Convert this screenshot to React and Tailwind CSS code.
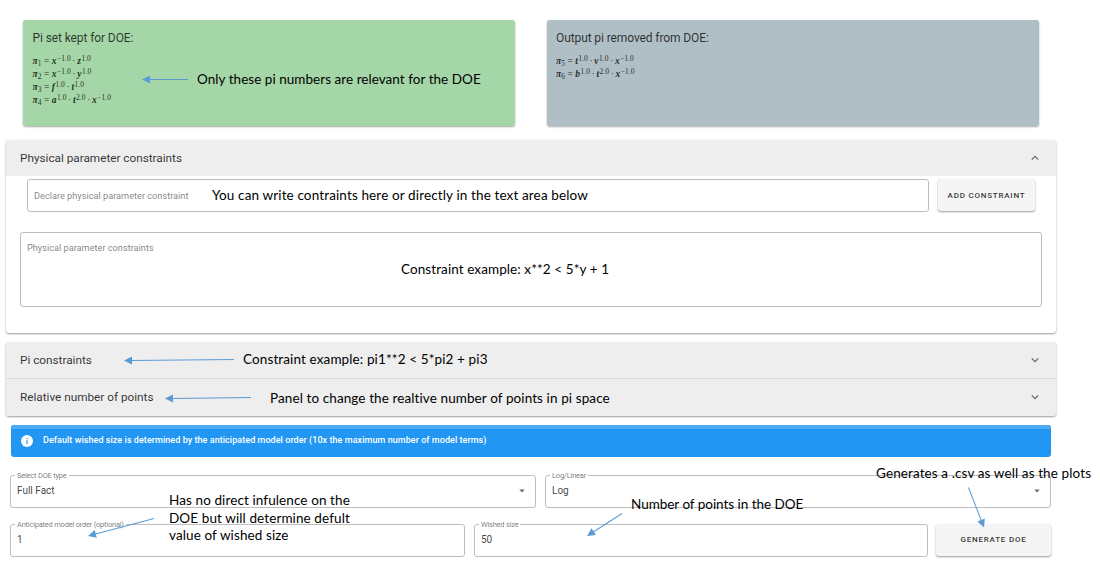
import React from "react";

const ROBOTO = "font-['Roboto',sans-serif]";

function Chevron({ up }) {
  return (
    <svg width="8" height="6" viewBox="0 0 8 6" fill="none" stroke="#666" strokeWidth="1.25">
      <path d={up ? "M0.8 4.6 L4 1.4 L7.2 4.6" : "M0.8 1.4 L4 4.6 L7.2 1.4"} />
    </svg>
  );
}

function Caret() {
  return (
    <svg width="6" height="4" viewBox="0 0 6 4" className="shrink-0">
      <path d="M0.3 0.5 H5.7 L3 3.4 Z" fill="#6b6b6b" />
    </svg>
  );
}

// A formula is a list of [base, exponent] factors.
function Formula({ index, factors }) {
  return (
    <div className="flex h-[13px] items-center whitespace-nowrap font-['Liberation_Serif',serif] text-[9.5px] leading-[13px] text-black/80">
      <i className="font-bold">π</i>
      <span className="relative top-[1.5px] text-[7.5px]">{index}</span>
      <span className="mx-[2.5px]">=</span>
      {factors.map(([base, exp], i) => (
        <span key={i} className="flex">
          {i > 0 && <span className="mx-[1.7px]">·</span>}
          <i className="font-bold">{base}</i>
          <span className="relative -top-[3px] ml-[0.5px] text-[7.5px]">{exp}</span>
        </span>
      ))}
    </div>
  );
}

function PiCard({ title, color, formulas }) {
  return (
    <section className={`h-[106px] w-[492px] rounded-[3px] px-[9.5px] pt-[9.4px] shadow-[0_1px_2px_rgba(0,0,0,0.35)] ${color}`}>
      <h2 className="mb-[8px] text-[12px] leading-[18px] tracking-[-0.1px] text-black/75">{title}</h2>
      {formulas.map((f) => (
        <Formula key={f.index} {...f} />
      ))}
    </section>
  );
}

function PanelHeader({ title, up, className = "" }) {
  return (
    <div className={`flex items-center justify-between bg-[#eeeeee] pl-[14px] pr-[17px] ${className}`}>
      <h3 className="pt-px text-[11.8px] tracking-[-0.02px] text-black/80">{title}</h3>
      <Chevron up={up} />
    </div>
  );
}

function OutlinedField({ label, value, select, className = "" }) {
  return (
    <fieldset className={`h-[38px] rounded-[3px] border border-[#bdbdbd] pl-[6px] pr-[10px] ${className}`}>
      <legend className="-ml-[2px] h-[11px] whitespace-nowrap px-[2px] text-[7.5px] leading-[11px] tracking-[-0.22px] text-black/55">{label}</legend>
      <div className="flex h-[20.6px] items-center justify-between text-[10px] text-black/75">
        <span>{value}</span>
        {select && <Caret />}
      </div>
    </fieldset>
  );
}

function Button({ children, className = "" }) {
  return (
    <button className={`h-[32px] shrink-0 rounded-[3px] bg-[#f5f5f5] pt-px text-[8px] font-medium tracking-[0.78px] text-black/80 shadow-[0_1px_2px_rgba(0,0,0,0.4)] ${className}`}>
      {children}
    </button>
  );
}

function Note({ children, className }) {
  return (
    <p className={`absolute whitespace-nowrap font-['Lato',sans-serif] text-[13.5px] leading-[17.5px] text-black [font-variant-ligatures:none] ${className}`}>{children}</p>
  );
}

const ARROWS = [
  [188, 79.5, 142, 79.5],
  [234, 359.5, 124, 360.5],
  [251, 397.5, 165, 398.5],
  [154, 518.5, 88, 536],
  [622, 513.5, 587, 536],
  [968.5, 487.5, 984, 527.5],
];

function Arrows() {
  return (
    <svg width="1100" height="572" className="pointer-events-none absolute left-0 top-0">
      {ARROWS.map(([x1, y1, x2, y2]) => {
        const len = Math.hypot(x2 - x1, y2 - y1);
        const angle = (Math.atan2(y2 - y1, x2 - x1) * 180) / Math.PI;
        return (
          <g key={`${x1}-${y1}`} transform={`translate(${x2} ${y2}) rotate(${angle})`}>
            <path d={`M${-len} 0 H-7`} stroke="#5b9bd5" strokeWidth="1" />
            <path d="M0 0 L-8 -4 V4 Z" fill="#5b9bd5" />
          </g>
        );
      })}
    </svg>
  );
}

export default function App() {
  return (
    <main className={`relative h-[572px] w-[1100px] overflow-hidden bg-white ${ROBOTO}`}>
      <div className="flex gap-[31.5px] pl-[23px] pt-[20px]">
        <PiCard
          title="Pi set kept for DOE:"
          color="bg-[#a5d6a7]"
          formulas={[
            { index: 1, factors: [["x", "−1.0"], ["z", "1.0"]] },
            { index: 2, factors: [["x", "−1.0"], ["y", "1.0"]] },
            { index: 3, factors: [["f", "1.0"], ["t", "1.0"]] },
            { index: 4, factors: [["a", "1.0"], ["t", "2.0"], ["x", "−1.0"]] },
          ]}
        />
        <PiCard
          title="Output pi removed from DOE:"
          color="bg-[#b0bec5]"
          formulas={[
            { index: 5, factors: [["t", "1.0"], ["v", "1.0"], ["x", "−1.0"]] },
            { index: 6, factors: [["b", "1.0"], ["t", "2.0"], ["x", "−1.0"]] },
          ]}
        />
      </div>

      <section className="ml-[6px] mt-[14px] h-[193px] w-[1050px] overflow-hidden rounded-[3px] bg-white shadow-[0_1px_2px_rgba(0,0,0,0.4)]">
        <PanelHeader title="Physical parameter constraints" up className="h-[36px]" />
        <div className="flex gap-[9px] pl-[21px] pt-[3px]">
          <div className="flex h-[33px] w-[902px] items-center rounded-[3px] border border-[#bdbdbd] pl-[6px] text-[9.2px] text-black/50">
            Declare physical parameter constraint
          </div>
          <Button className="w-[97px]">ADD CONSTRAINT</Button>
        </div>
        <div className="ml-[14px] mt-[20px] h-[75px] w-[1022px] rounded-[3px] border border-[#bdbdbd] pl-[6px] pt-[8px] text-[9.2px] leading-[13px] text-black/50">
          Physical parameter constraints
        </div>
      </section>

      <section className="ml-[6px] mt-[9px] h-[74px] w-[1050px] overflow-hidden rounded-[3px] shadow-[0_1px_2px_rgba(0,0,0,0.4)]">
        <PanelHeader title="Pi constraints" className="h-[37px] border-b border-[#dcdcdc]" />
        <PanelHeader title="Relative number of points" className="h-[37px] pb-px" />
      </section>

      <div className="ml-[11px] mt-[8.5px] h-[32px] w-[1040px] overflow-hidden rounded-[3px] bg-[#2196f3] text-[9px] text-white">
        <div className="h-[4px] bg-[#4dabf5]" />
        <div className="flex h-[24px] items-center pl-[10px]">
          <svg width="12" height="12" viewBox="0 0 12 12" className="mr-[10px]">
            <circle cx="6" cy="6" r="6" fill="white" />
            <path d="M6 3 V4.2 M6 5.3 V9" stroke="#2196f3" strokeWidth="1.2" />
          </svg>
          <span className="font-medium tracking-[0.055px]">
            Default wished size is determined by the anticipated model order (10x the maximum number of model terms)
          </span>
        </div>
      </div>

      <div className="ml-[10px] mt-[13px] flex gap-[9px]">
        <OutlinedField label="Select DOE type" value="Full Fact" select className="w-[526px]" />
        <OutlinedField label="Log/Linear" value="Log" select className="w-[506px]" />
      </div>
      <div className="ml-[10px] mt-[11px] flex gap-[9px]">
        <OutlinedField label="Anticipated model order (optional)" value="1" className="w-[455px]" />
        <OutlinedField label="Wished size" value="50" className="w-[454px]" />
        <Button className="-ml-px mt-[5px] w-[115px]">GENERATE DOE</Button>
      </div>

      <Arrows />
      <Note className="left-[197px] top-[71px] tracking-[0.04px]">Only these pi numbers are relevant for the DOE</Note>
      <Note className="left-[212px] top-[187px] tracking-[0.13px]">You can write contraints here or directly in the text area below</Note>
      <Note className="left-[401px] top-[261px] tracking-[0.09px]">Constraint example: x**2 &lt; 5*y + 1</Note>
      <Note className="left-[243px] top-[351px] tracking-[0.12px]">Constraint example: pi1**2 &lt; 5*pi2 + pi3</Note>
      <Note className="left-[270px] top-[390px] tracking-[0.1px]">Panel to change the realtive number of points in pi space</Note>
      <Note className="left-[169px] top-[492px] tracking-[0.1px]">
        Has no direct infulence on the
        <br />
        DOE but will determine defult
        <br />
        value of wished size
      </Note>
      <Note className="left-[631px] top-[496px] tracking-[-0.03px]">Number of points in the DOE</Note>
      <Note className="left-[876px] top-[465px] tracking-[0.11px]">Generates a .csv as well as the plots</Note>
    </main>
  );
}
